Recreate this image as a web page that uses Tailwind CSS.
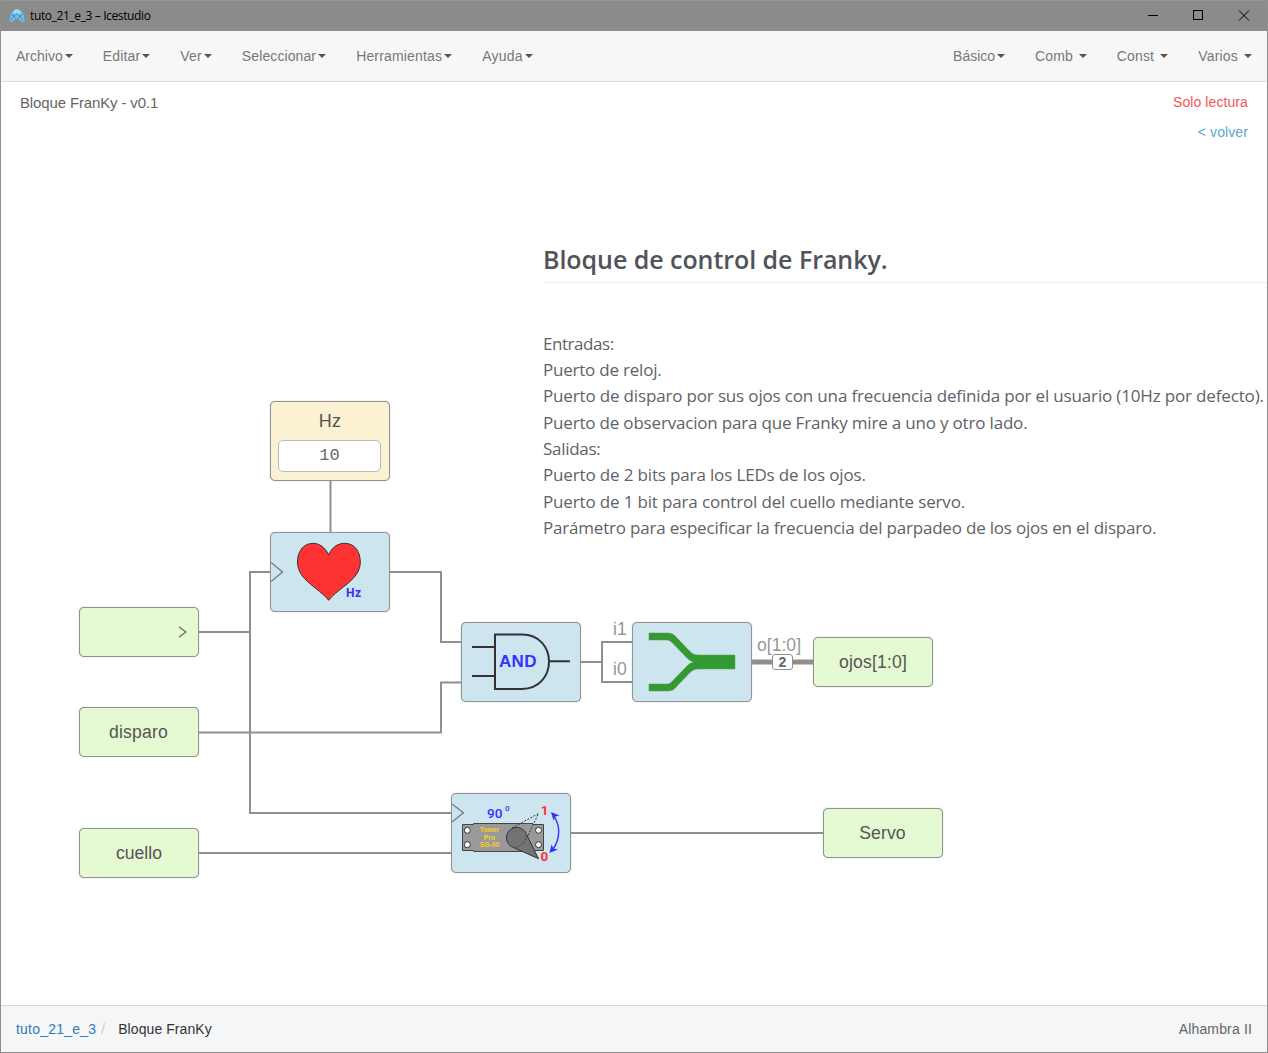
<!DOCTYPE html>
<html lang="es">
<head>
<meta charset="utf-8">
<title>tuto_21_e_3 – Icestudio</title>
<script src="https://cdn.jsdelivr.net/npm/@tailwindcss/browser@4"></script>
</head>
<body class="flex h-screen w-screen flex-col overflow-hidden border border-t-0 border-[#8f8f8f] bg-white font-['Liberation_Sans',sans-serif] text-sm text-[#777]">

<!-- Window title bar -->
<header class="-mx-px flex h-[31px] shrink-0 items-center border-t border-[#959595] bg-[#8b8b8b] px-[9px]">
  <svg class="-mt-px h-[14px] w-[16px]" viewBox="0 0 16 14">
    <path d="M6 .5H10L12 2.500L14.500 4.500L15.500 12.500L13 13L10 10.500L8 9L6 10.500L3 13L.5 12.500L1.500 4.500L4 2.500Z" fill="#6cc5ee"/>
    <path d="M6 .5H10L12 3L10 5L8 3.500L6 5L4 3Z" fill="#9ddcf8"/>
    <path d="M2 5L5 7L1.500 12M14 5L11 7L14.500 12M5 7L8 5L11 7M5 8L7 9.500M11 8L9 9.500" fill="none" stroke="#23516a" stroke-width=".9" stroke-dasharray="1 1"/>
  </svg>
  <span class="ml-[5px] font-['Open_Sans',sans-serif] text-[12px] tracking-[-0.38px] text-black">tuto_21_e_3 – Icestudio</span>
  <svg class="-mt-px ml-auto h-[11px] w-[102px]" viewBox="0 0 102 11" fill="none" stroke="#000" stroke-width="1" shape-rendering="crispEdges">
    <path d="M0 5.500H10M45.500 .5H54.500V9.500H45.500Z"/>
    <path d="M91 .5L101 10.500M101 .5L91 10.500" shape-rendering="auto"/>
  </svg>
  <span class="w-[9px]"></span>
</header>

<!-- Menu bar -->
<nav class="flex h-[51px] shrink-0 items-center justify-between border-b border-[#dedede] bg-[#f7f7f7] px-[15px]">
  <div class="flex gap-[30px]">
    <span class="flex items-center gap-[2px]">Archivo<i class="border-x-4 border-t-4 border-x-transparent border-t-[#555]"></i></span>
    <span class="flex items-center gap-[2px] tracking-[0.16px]">Editar<i class="border-x-4 border-t-4 border-x-transparent border-t-[#555]"></i></span>
    <span class="flex items-center gap-[2px] tracking-[0.2px]">Ver<i class="border-x-4 border-t-4 border-x-transparent border-t-[#555]"></i></span>
    <span class="flex items-center gap-[2px] tracking-[0.1px]">Seleccionar<i class="border-x-4 border-t-4 border-x-transparent border-t-[#555]"></i></span>
    <span class="flex items-center gap-[2px] tracking-[0.17px]">Herramientas<i class="border-x-4 border-t-4 border-x-transparent border-t-[#555]"></i></span>
    <span class="flex items-center gap-[2px] tracking-[0.2px]">Ayuda<i class="border-x-4 border-t-4 border-x-transparent border-t-[#555]"></i></span>
  </div>
  <div class="flex gap-[30px]">
    <span class="flex items-center gap-[2px]">Básico<i class="border-x-4 border-t-4 border-x-transparent border-t-[#555]"></i></span>
    <span class="flex items-center gap-[6px] tracking-[0.1px]">Comb<i class="border-x-4 border-t-4 border-x-transparent border-t-[#555]"></i></span>
    <span class="flex items-center gap-[6px] tracking-[0.15px]">Const<i class="border-x-4 border-t-4 border-x-transparent border-t-[#555]"></i></span>
    <span class="flex items-center gap-[6px] tracking-[0.2px]">Varios<i class="border-x-4 border-t-4 border-x-transparent border-t-[#555]"></i></span>
  </div>
</nav>

<!-- Design canvas -->
<main class="relative min-h-0 flex-1 overflow-hidden bg-white">
  <div class="flex justify-between px-[19px] pt-[11px]">
    <h1 class="text-[15px] leading-5 tracking-[-0.14px] text-[#666]">Bloque FranKy - v0.1</h1>
    <div class="flex flex-col items-end gap-[10px] leading-5 tracking-[0.09px]">
      <span class="-mt-px text-[#f2555a]">Solo lectura</span>
      <span class="text-[#5ba7d0]">&lt; volver</span>
    </div>
  </div>

  <!-- Wires -->
  <svg class="absolute inset-0 h-[923px] w-[1266px]" viewBox="1 82 1266 923" fill="none" stroke="#8f8f8f" stroke-width="2">
    <path d="M330.500 480V533M199 632H250M271 572H250V813H452M390 572H441V642H462M199 732.500H441V682.500H462M199 853H452M581 662H602M633 642H602V682H633M571 833H823"/>
    <path d="M752 662H813" stroke-width="5"/>
  </svg>

  <!-- Notes -->
  <section class="absolute left-[542px] top-[158px] w-[724px] font-['Open_Sans',sans-serif] text-[#5f6267]">
    <h2 class="h-[43px] border-b border-[#eaecef] text-[25px] font-semibold leading-[39px] tracking-[-0.05px] text-[#50545a]">Bloque de control de Franky.</h2>
    <div class="mt-[47.5px] whitespace-nowrap text-[17px] leading-[26.36px]">
      <p class="tracking-[-0.45px]">Entradas:</p>
      <p class="tracking-[-0.22px]">Puerto de reloj.</p>
      <p class="tracking-[-0.16px]">Puerto de disparo por sus ojos con una frecuencia definida por el usuario (10Hz por defecto).</p>
      <p class="tracking-[-0.185px]">Puerto de observacion para que Franky mire a uno y otro lado.</p>
      <p class="tracking-[-0.3px]">Salidas:</p>
      <p class="tracking-[-0.15px]">Puerto de 2 bits para los LEDs de los ojos.</p>
      <p class="tracking-[-0.155px]">Puerto de 1 bit para control del cuello mediante servo.</p>
      <p class="tracking-[-0.2px]">Parámetro para especificar la frecuencia del parpadeo de los ojos en el disparo.</p>
    </div>
  </section>

  <!-- Constant block -->
  <div class="absolute left-[269px] top-[319px] flex h-20 w-[120px] flex-col items-center rounded-[5px] border border-[#929292] bg-[#fbf2d3] px-2 shadow-[0_0_1px_#999]">
    <span class="mt-[9px] text-[18px] leading-5 tracking-[0.2px] text-[#555]">Hz</span>
    <span class="-ml-px mt-[9px] flex h-8 w-[103px] items-center justify-center rounded-[5px] border border-[#bbb] bg-white pt-px font-['Liberation_Mono',monospace] text-[17px] text-[#666]">10</span>
  </div>

  <!-- Input ports -->
  <div class="absolute left-[78px] top-[525px] flex h-[50px] w-[120px] items-center justify-end rounded-[5px] border border-[#929292] bg-[#e5fad2] pr-[11px] shadow-[0_0_1px_#999]">
    <svg class="mb-px h-3 w-[9px]" viewBox="0 0 9 12" fill="none" stroke="#666" stroke-width="1.300"><path d="M1 1L8 6L1 11"/></svg>
  </div>
  <div class="absolute left-[78px] top-[625px] flex h-[50px] w-[120px] items-center justify-center rounded-[5px] border border-[#929292] bg-[#e5fad2] pr-px pt-[2px] text-[17.6px] tracking-[0.2px] text-[#555] shadow-[0_0_1px_#999]">disparo</div>
  <div class="absolute left-[78px] top-[746px] flex h-[50px] w-[120px] items-center justify-center rounded-[5px] border border-[#929292] bg-[#e5fad2] pt-[2px] text-[17.6px] text-[#555] shadow-[0_0_1px_#999]">cuello</div>

  <!-- Output ports -->
  <div class="absolute left-[812px] top-[555px] flex h-[50px] w-[120px] items-center justify-center rounded-[5px] border border-[#929292] bg-[#e5fad2] pt-[2px] text-[17.6px] tracking-[0.15px] text-[#555] shadow-[0_0_1px_#999]">ojos[1:0]</div>
  <div class="absolute left-[822px] top-[726px] flex h-[50px] w-[120px] items-center justify-center rounded-[5px] border border-[#929292] bg-[#e5fad2] pr-px pt-[2px] text-[17.6px] tracking-[0.1px] text-[#555] shadow-[0_0_1px_#999]">Servo</div>

  <!-- Heart block -->
  <div class="absolute left-[269px] top-[450px] h-20 w-[120px] rounded-[5px] border border-[#929292] bg-[#cde5ee] shadow-[0_0_1px_#999]">
    <svg class="block h-[78px] w-[118px]" viewBox="271 533 118 78">
      <path d="M271 562.500L282.500 572L271 581.500" fill="none" stroke="#777" stroke-width="1.300"/>
      <path d="M328.700 555C325 547 319 543.300 313 543.300C303 543.300 297.500 552 297.500 562C297.500 580 318 587 328.700 600.300C339 587 360.300 580 360.300 562C360.300 552 355 543.300 344.500 543.300C338 543.300 332 547 328.700 555Z" fill="#f33" stroke="#333"/>
      <text x="346" y="597" font-size="12" font-weight="bold" font-family="Roboto, sans-serif" textLength="15" fill="#33f">Hz</text>
    </svg>
  </div>

  <!-- AND gate -->
  <div class="absolute left-[460px] top-[540px] h-20 w-[120px] rounded-[5px] border border-[#929292] bg-[#cde5ee] shadow-[0_0_1px_#999]">
    <svg class="block h-[78px] w-[118px]" viewBox="462 623 118 78">
      <path d="M495 634.500H522C539 634.500 549 647 549 661.500S539 689 522 689H495ZM472 647H495M472 676H495M549 661.300H570" fill="none" stroke="#333" stroke-width="2"/>
      <text x="499" y="667" font-size="17" font-weight="bold" textLength="37.500" fill="#33f">AND</text>
    </svg>
  </div>

  <!-- Bus joiner -->
  <div class="absolute left-[631px] top-[540px] h-20 w-[120px] rounded-[5px] border border-[#929292] bg-[#cde5ee] shadow-[0_0_1px_#999]">
    <svg class="block h-[78px] w-[118px]" viewBox="633 623 118 78">
      <path d="M649 633H668C673 633 675.500 636 678 639L690 651.500Q693 655 698 655H735V669H698Q693 669 690 672.500L678 685C675.500 688 673 691 668 691H649V684H667Q670 684 672 681.500L687 666Q690 662.500 694 662Q690 661.500 687 658L672 642.500Q670 640 667 640H649Z" fill="#393" stroke="#5a9a5a" stroke-width=".5"/>
    </svg>
  </div>

  <!-- Servo block -->
  <div class="absolute left-[450px] top-[711px] h-20 w-[120px] rounded-[5px] border border-[#929292] bg-[#cde5ee] shadow-[0_0_1px_#999]">
    <svg class="block h-[78px] w-[118px]" viewBox="452 794 118 78">
      <path d="M452 804L463.500 812.700L452 822" fill="none" stroke="#777" stroke-width="1.300"/>
      <path d="M462.500 824.500H473.500V823.500H533V824.500H543.500V850.500H533V851.500H473.500V850.500H462.500Z" fill="#999" stroke="#444"/>
      <g fill="#fff" stroke="#333">
        <circle cx="467.300" cy="830.300" r="3"/><circle cx="467.300" cy="844.700" r="3"/>
        <circle cx="538.500" cy="830.300" r="3"/><circle cx="538.500" cy="844.700" r="3"/>
      </g>
      <path d="M512 828L538.500 813.500L526 840Q522 848 516 848" fill="none" stroke="#333" stroke-dasharray="2 1.500"/>
      <path d="M513.500 847.500L538.500 858.700L526.500 834.500A10.300 10.300 0 1 0 513.500 847.500Z" fill="#737373" stroke="#333"/>
      <path d="M526.500 834.500Q527 844 515 847.500" fill="none" stroke="#333" stroke-width=".8" stroke-dasharray="2 1.500"/>
      <g font-size="6.800" font-weight="bold" fill="#fc2" text-anchor="middle">
        <text x="489.500" y="832">Tower</text><text x="489.500" y="840">Pro</text><text x="489.500" y="847">SG-90</text>
      </g>
      <g font-family="Roboto, sans-serif" fill="#33f">
        <text x="487" y="817.500" font-size="13.500" font-weight="500" textLength="15.500">90</text>
        <text x="505" y="811" font-size="8" font-weight="500">0</text>
      </g>
      <g font-family="Roboto, sans-serif" font-size="13.500" font-weight="bold" fill="#f33">
        <text x="540.800" y="815">1</text><text x="540.500" y="861">0</text>
      </g>
      <path d="M554 816Q564 832 553 849.500" fill="none" stroke="#33f" stroke-width="1.400"/>
      <path d="M551 812L559.500 815.500L555.500 816.500L553.500 820.500ZM549.500 853L551.500 844.500L553.500 848.500L558 849.500Z" fill="#33f"/>
    </svg>
  </div>

  <!-- Port labels and bus width -->
  <span class="absolute left-[612px] top-[537px] text-[17.6px] leading-5 text-[#979797]">i1</span>
  <span class="absolute left-[612px] top-[577px] text-[17.6px] leading-5 text-[#979797]">i0</span>
  <span class="absolute left-[756px] top-[553px] text-[17.6px] leading-5 text-[#979797]">o[1:0]</span>
  <span class="absolute left-[771px] top-[572px] flex h-4 w-[21px] items-center justify-center rounded-[3px] border border-[#8f8f8f] bg-white text-[14px] font-bold text-[#666]">2</span>
</main>

<!-- Breadcrumb footer -->
<footer class="flex h-[47px] shrink-0 items-center justify-between border-t border-[#d8d8d8] bg-[#f4f6f8] px-[15px]">
  <div class="flex">
    <span class="tracking-[0.22px] text-[#337ab7]">tuto_21_e_3</span>
    <span class="ml-[5px] text-[#ccc]">/</span>
    <span class="ml-[13px] tracking-[0.08px] text-[#333]">Bloque FranKy</span>
  </div>
  <span class="tracking-[0.15px] text-[#666]">Alhambra II</span>
</footer>
</body>
</html>
